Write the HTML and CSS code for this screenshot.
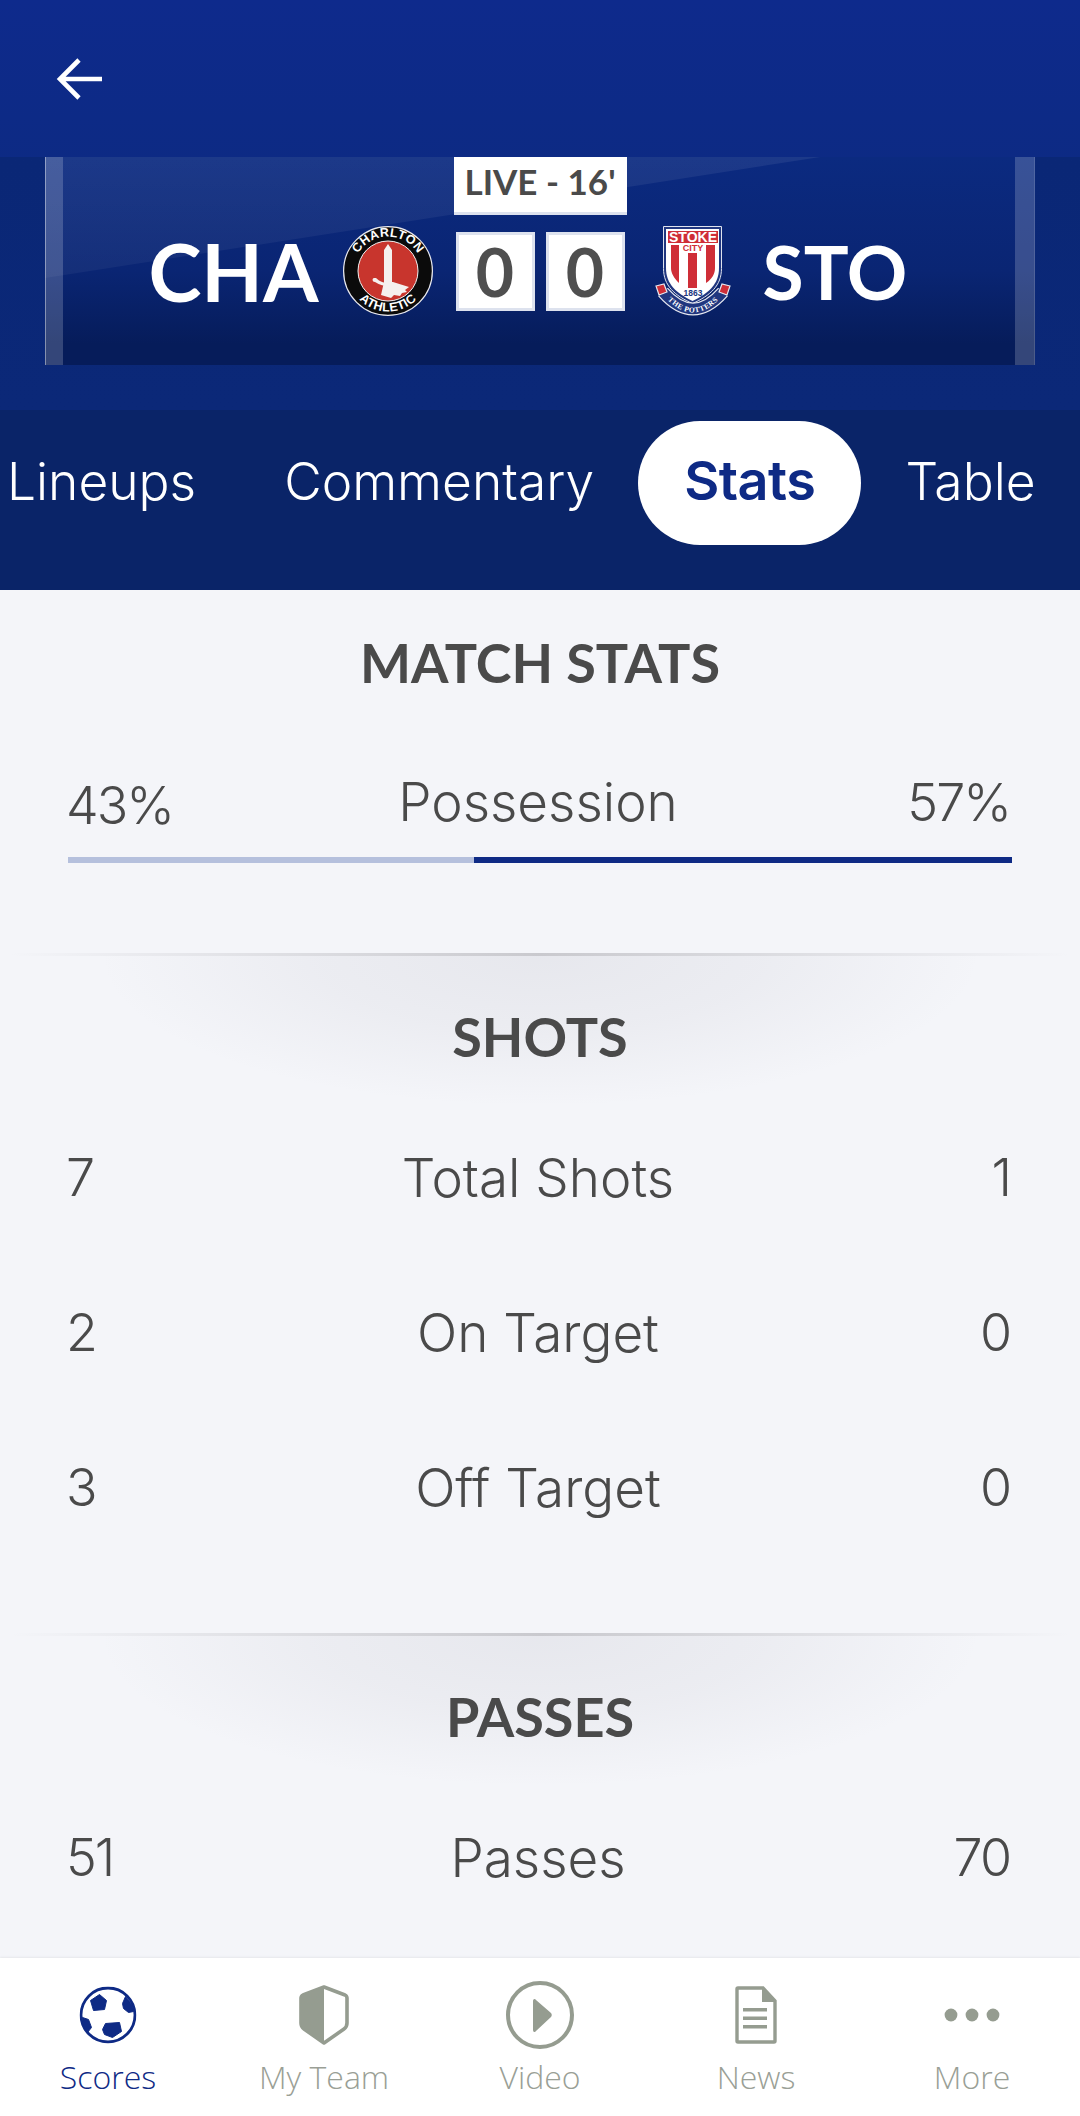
FILE: index.html
```html
<!DOCTYPE html>
<html lang="en">
<head>
<meta charset="utf-8">
<title>Match Stats</title>
<link rel="stylesheet" href="styles.css">
</head>
<body>
<div class="app">
  <header class="top">
    <div class="topbar">
      <svg class="back" viewBox="0 0 48 44" width="48" height="44"><path d="M46 22H4M23 3 4 22l19 19" fill="none" stroke="#fff" stroke-width="4.6"/></svg>
    </div>
    <div class="scorewrap">
      <div class="panel">
        <i class="post post-l"></i>
        <i class="post post-r"></i>
        <div class="live">LIVE - 16'</div>
        <div class="scoreline">
          <div class="side side-l">
            <span class="tri tri-l">CHA</span>
            <svg class="crest" viewBox="0 0 90 90" width="90" height="90">
              <defs>
                <path id="arcT" d="M10.5 45a34.5 34.5 0 0 1 69 0"/>
                <path id="arcB" d="M4.5 45a40.5 40.5 0 0 0 81 0"/>
              </defs>
              <circle cx="45" cy="45" r="44.4" fill="#0b0b0b" stroke="#e9e9ee" stroke-width="1.2"/>
              <circle cx="45" cy="45" r="30" fill="#c8352d" stroke="#f3f3f3" stroke-width="1"/>
              <path d="M41 24 45 18l4 6v32h-8z" fill="#f5f0ee"/>
              <path d="M31 52c-2 0-2 4 1 4 5 3 9 4 14 4v-3c-5 0-9-1-13-5z" fill="#f5f0ee"/>
              <path d="M41 56h9l16 5-4 3 2 2-5 1-2 3-6-1-3 3-10-3z" fill="#f5f0ee"/>
              <text class="crest-t"><textPath href="#arcT" startOffset="50%" text-anchor="middle">CHARLTON</textPath></text>
              <text class="crest-t"><textPath href="#arcB" startOffset="50%" text-anchor="middle">ATHLETIC</textPath></text>
            </svg>
          </div>
          <div class="scores"><span class="num">0</span><span class="num">0</span></div>
          <div class="side side-r">
            <svg class="crest" viewBox="0 0 78 90" width="78" height="90">
              <defs><path id="arcP" d="M9 69Q39 104 69 69"/></defs>
              <path d="M9.5 .5h58v42c0 17-11 27-29 35C20.500 69.500 9.500 59.500 9.500 42.500z" fill="#20367f" stroke="#dfe3ee" stroke-width="1"/>
              <path d="M12 3h53v39c0 16-10 25-26.500 33C22 67 12 58 12 42z" fill="#fff"/>
              <path d="M14 5h50v12H14zM17 19h8v38c-5-5-8-10-8-15zM34 27h9v35h-9zM52 19h9v23c0 6-3 11-9 15z" fill="#cf2e37"/>
              <text class="st-a" x="39" y="15.500">STOKE</text>
              <text class="st-b" x="39" y="25">CITY</text>
              <text class="st-c" x="39" y="70">1863</text>
              <path d="M9 66Q39 100 69 66" fill="none" stroke="#e6e8f0" stroke-width="13"/>
              <path d="M9 66Q39 100 69 66" fill="none" stroke="#20367f" stroke-width="10.500"/>
              <path d="M2 60l8-2 3 8-8 3zM76 60l-8-2-3 8 8 3z" fill="#cf2e37" stroke="#e6e8f0" stroke-width="1.200"/>
              <text class="st-d"><textPath href="#arcP" startOffset="50%" text-anchor="middle">THE POTTERS</textPath></text>
            </svg>
            <span class="tri tri-r">STO</span>
          </div>
        </div>
      </div>
    </div>
    <nav class="tabs">
      <span class="tab tab-first">Lineups</span>
      <span class="tab">Commentary</span>
      <span class="tab tab-on">Stats</span>
      <span class="tab">Table</span>
    </nav>
  </header>

  <main class="content">
    <h2 class="heading heading-main">MATCH STATS</h2>
    <section class="poss">
      <div class="poss-row">
        <span class="v v-low">43%</span>
        <span class="l">Possession</span>
        <span class="v v-r">57%</span>
      </div>
      <div class="bar"><i class="bar-a" style="width:43%"></i><i class="bar-b" style="width:57%"></i></div>
    </section>

    <section class="group">
      <h2 class="heading">SHOTS</h2>
      <div class="row"><span class="v">7</span><span class="l">Total Shots</span><span class="v v-r">1</span></div>
      <div class="row"><span class="v">2</span><span class="l">On Target</span><span class="v v-r">0</span></div>
      <div class="row"><span class="v">3</span><span class="l">Off Target</span><span class="v v-r">0</span></div>
    </section>

    <section class="group group-2">
      <h2 class="heading">PASSES</h2>
      <div class="row"><span class="v">51</span><span class="l">Passes</span><span class="v v-r">70</span></div>
    </section>
  </main>

  <footer class="nav">
    <div class="item item-on">
      <svg viewBox="0 0 57 57" width="57" height="57"><circle cx="28.500" cy="28.500" r="27" fill="#fff" stroke="#0e2a85" stroke-width="2.800"/><path d="M20 8l7 6-2 9-11 1-3-10zM46 10l7 9 1 6-5 1-5-4-1-5zM26 37l14-1 2 9-9 6-8-3-2-5zM3 31l6 2 3 8-4 5-4-6z" fill="#0e2a85" stroke="#0e2a85" stroke-linejoin="round"/></svg>
      <span>Scores</span>
    </div>
    <div class="item">
      <svg viewBox="0 0 50 60" width="50" height="60"><path d="M25 2 46 10q2 1 2 3V38q0 4-3 6L25 58 5 44q-3-2-3-6V13q0-2 2-3z" fill="#fff" stroke="#959c90" stroke-width="3.600" stroke-linejoin="round"/><path d="M25 2 4 10q-2 1-2 3V38q0 4 3 6L25 58z" fill="#959c90"/></svg>
      <span>My Team</span>
    </div>
    <div class="item">
      <svg viewBox="0 0 68 68" width="68" height="68"><circle cx="34" cy="34" r="32" fill="none" stroke="#959c90" stroke-width="4"/><path d="M27 20c0-2 2-3 3-1L45 32c1 1 1 3 0 4L30 50c-1 2-3 1-3-1z" fill="#959c90"/></svg>
      <span>Video</span>
    </div>
    <div class="item">
      <svg viewBox="0 0 42 58" width="42" height="58"><path d="M2 3a1 1 0 0 1 1-1h25l12 13v40a1 1 0 0 1-1 1H3a1 1 0 0 1-1-1z" fill="none" stroke="#959c90" stroke-width="3.400"/><path d="M27 2l13 14H27zM8 22h24v3.600H8zM8 30.500h24v3.600H8zM8 39h24v3.600H8z" fill="#959c90"/></svg>
      <span>News</span>
    </div>
    <div class="item">
      <svg viewBox="0 0 56 14" width="56" height="14"><circle cx="7" cy="7" r="6.400" fill="#959c90"/><circle cx="28" cy="7" r="6.400" fill="#959c90"/><circle cx="49" cy="7" r="6.400" fill="#959c90"/></svg>
      <span>More</span>
    </div>
  </footer>
</div>
</body>
</html>
```
FILE: styles.css
```css
* { box-sizing: border-box; }
html, body { margin: 0; padding: 0; }
body { background: #f4f5f9; font-family: "Inter", "Open Sans", sans-serif; color: #4a4a4a; }
.app { width: 1080px; height: 2116px; overflow: hidden; display: flex; flex-direction: column; position: relative; }

.top { height: 590px; flex: none; display: flex; flex-direction: column; background: linear-gradient(180deg, #0e2a8c 0%, #0c2a80 40%, #0b2772 70%); }
.topbar { height: 157px; flex: none; padding: 57px 0 0 56px; }
.back { display: block; }

.scorewrap { height: 253px; flex: none; padding: 0 45px; background: linear-gradient(180deg, #0a2776 0%, #0b2878 100%); }
.panel { height: 208px; position: relative; overflow: hidden; display: flex; flex-direction: column; align-items: center;
  background: linear-gradient(180deg, #0b2a80 0%, #0a2573 55%, #061c5a 90%, #061c5a 100%); }
.panel::before { content: ""; position: absolute; left: 0; right: 0; top: 0; height: 121px;
  background: linear-gradient(180deg, rgba(255,255,255,.07), rgba(255,255,255,.045)); clip-path: polygon(0 0, 78.300% 0, 0 100%); }
.post { position: absolute; top: 0; bottom: 0; display: block; background: rgba(255,255,255,.19); }
.post-l { left: 0; width: 18px; border-left: 1.500px solid rgba(255,255,255,.4); }
.post-r { right: 0; width: 20px; border-right: 1.500px solid rgba(255,255,255,.12); }
.live { position: relative; width: 173px; height: 58px; background: #fff; border-bottom: 3px solid #dde2ee; font-family: "Lato", sans-serif; font-size: 35px; font-weight: 700; color: #4a4a4a; text-align: center; line-height: 49px; white-space: nowrap; }
.scoreline { position: relative; width: 100%; display: grid; grid-template-columns: 1fr auto 1fr; column-gap: 23px; align-items: center; height: 90px; margin-top: 11px; }
.side { display: flex; align-items: center; }
.side-l { justify-content: flex-end; gap: 24px; }
.side-r { justify-content: flex-start; gap: 31px; padding-left: 6px; }
.tri { font-family: "Lato", sans-serif; font-weight: 700; color: #fff; line-height: 90px; }
.tri-l { font-size: 80px; }
.tri-r { font-size: 75px; }
.scores { display: flex; gap: 11px; }
.num { width: 79px; height: 79px; background: #fff; border: 3px solid #dde2ee; font-family: "Lato", sans-serif; font-size: 66px; font-weight: 700; color: #4f4f4f; display: flex; align-items: center; justify-content: center; }
.crest { display: block; flex: none; }
.crest-t { font-family: "Liberation Sans", sans-serif; font-size: 12.500px; font-weight: 700; fill: #fff; letter-spacing: .4px; }
.st-a { font-family: "Liberation Sans", sans-serif; font-size: 14px; font-weight: 700; fill: #fff; text-anchor: middle; }
.st-b { font-family: "Liberation Sans", sans-serif; font-size: 9px; font-weight: 700; fill: #cf2e37; text-anchor: middle; }
.st-c { font-family: "Liberation Sans", sans-serif; font-size: 8.500px; font-weight: 700; fill: #20367f; text-anchor: middle; }
.st-d { font-family: "Liberation Serif", serif; font-size: 7.500px; font-weight: 700; fill: #fff; letter-spacing: .5px; }

.tabs { height: 180px; flex: none; display: flex; align-items: flex-start; padding: 11px 0 0 7px; background: #0a2468; font-size: 51.500px; font-weight: 300; color: #fff; white-space: nowrap; }
.tab { padding: 0 44px; height: 124px; line-height: 120px; border-radius: 62px; flex: none; }
.tab-first { padding-left: 0; }
.tab-on { padding: 0 46px; background: #fff; color: #0e2a85; font-weight: 600; font-size: 54px; letter-spacing: -.5px; }

.content { flex: 1; min-height: 0; overflow: hidden; }
.heading { margin: 0; text-align: center; font-family: "Lato", sans-serif; font-size: 54px; font-weight: 700; color: #4a4a4a; line-height: 60px; }
.heading-main { padding-top: 43px; }
.poss { padding: 0 68px; margin-top: 79px; }
.poss-row { display: flex; justify-content: space-between; align-items: center; height: 60px; }
.l { font-size: 53px; font-weight: 300; flex: 1; text-align: center; white-space: nowrap; }
.v { font-size: 52px; font-weight: 300; width: 130px; letter-spacing: -2px; margin-left: -2px; }
.v-r { text-align: right; margin-left: 0; margin-right: 2px; }
.v-low { position: relative; top: 3px; }
.bar { display: flex; height: 6px; margin-top: 25px; }
.bar-a { background: #b5c0dd; display: block; }
.bar-b { background: #0e2a85; display: block; }

.group { margin-top: 90px; position: relative; padding: 54px 68px 0; height: 680px; }
.group-2 { margin-top: 0; height: 330px; }
.group::before { content: ""; position: absolute; left: 0; right: 0; top: 0; height: 3px;
  background: linear-gradient(90deg, rgba(190,190,195,0) 1%, #c9c9ce 50%, rgba(190,190,195,0) 99%); }
.group::after { content: ""; position: absolute; left: 100px; right: 100px; top: 3px; height: 150px; z-index: -1;
  background: radial-gradient(ellipse 50% 100% at 50% 0, rgba(150,150,165,.14) 0%, rgba(150,150,165,.09) 50%, rgba(150,150,165,0) 100%); }
.group .heading { position: relative; }
.row { display: flex; justify-content: space-between; align-items: center; height: 155px; }
.group .row:nth-child(2) { margin-top: 33px; }

.nav { position: absolute; left: 0; right: 0; bottom: 0; height: 158px; background: #fff; display: flex; box-shadow: 0 -1px 2px rgba(0,0,0,.06); }
.item { width: 216px; flex: none; height: 158px; display: flex; flex-direction: column; align-items: center; color: #9a9f96; font-family: "Open Sans", sans-serif; font-size: 32px; font-weight: 300; position: relative; padding-top: 98px; }
.item svg { position: absolute; left: 50%; top: 57px; transform: translate(-50%, -50%); }
.item span { line-height: 42px; }
.item-on { color: #0e2a85; }
```
